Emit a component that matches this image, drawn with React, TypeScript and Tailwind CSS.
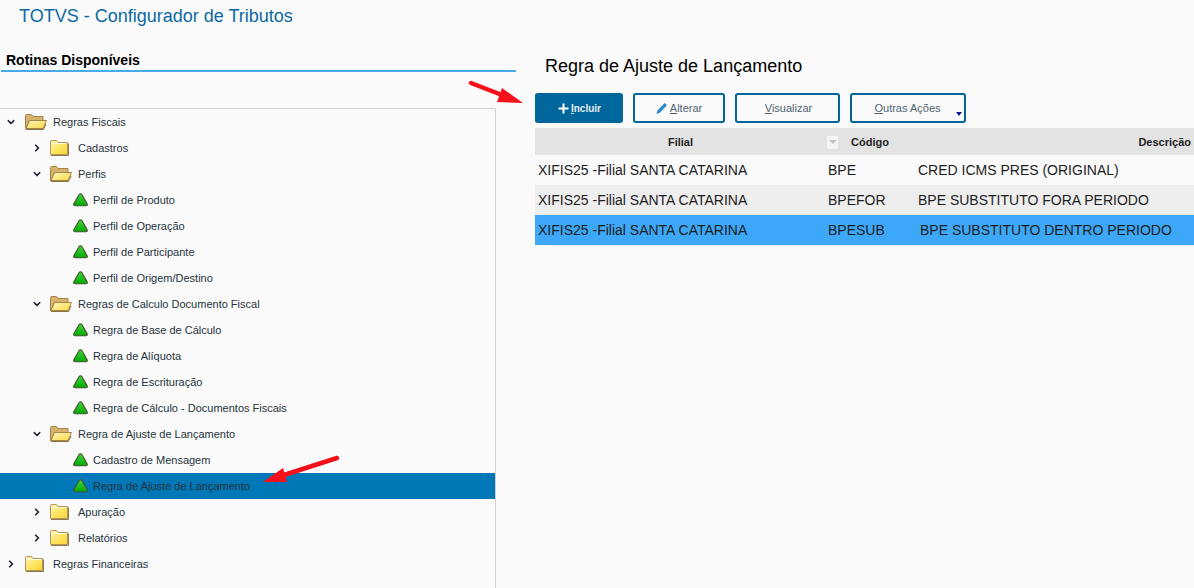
import React from "react";

const ClosedFolder = () => (
  <svg width="19" height="16" viewBox="0 0 19 16" className="shrink-0">
    <defs>
      <linearGradient id="fc" x1="0" y1="0" x2="1" y2="1">
        <stop offset="0" stopColor="#fff6b8" />
        <stop offset="0.55" stopColor="#fde45e" />
        <stop offset="1" stopColor="#f8d438" />
      </linearGradient>
    </defs>
    <path d="M0.5 14.5 L0.5 1.5 Q0.5 0.5 1.5 0.5 L6.5 0.5 L8 2.5 L17.5 2.5 L17.5 14.5 Z" fill="url(#fc)" stroke="#b4935a" />
    <path d="M1.5 3.5 H16.5" stroke="#fffce6" strokeWidth="1" />
    <path d="M1 15.5 H18.5 V3.5" fill="none" stroke="#8f7a4e" strokeWidth="1" />
  </svg>
);

const OpenFolder = () => (
  <svg width="22" height="16" viewBox="0 0 22 16" className="shrink-0">
    <defs>
      <linearGradient id="fo" x1="0" y1="0" x2="1" y2="1">
        <stop offset="0" stopColor="#fff7c0" />
        <stop offset="1" stopColor="#f9d840" />
      </linearGradient>
    </defs>
    <path d="M0.5 15 L0.5 1.5 Q0.5 0.5 1.5 0.5 L6.5 0.5 L8 2.5 L18 2.5 L18 7 L4 7 Z" fill="#d6b26a" stroke="#a5854a" />
    <path d="M4.5 6.5 L21.5 6.5 L18 14.5 L1 14.5 Z" fill="url(#fo)" stroke="#a5854a" />
    <path d="M1 15.5 H18.5 L21 10" fill="none" stroke="#86713f" />
  </svg>
);

const Leaf = () => (
  <svg width="15" height="14" viewBox="0 0 15 14" className="shrink-0">
    <defs>
      <linearGradient id="lf" x1="0" y1="0" x2="0" y2="1">
        <stop offset="0" stopColor="#3ed83e" />
        <stop offset="1" stopColor="#00a800" />
      </linearGradient>
    </defs>
    <path d="M7.5 0.8 Q8.4 0.8 9 1.8 L14 10.6 Q15 12.8 12.7 12.8 L2.3 12.8 Q0 12.8 1 10.6 L6 1.8 Q6.6 0.8 7.5 0.8 Z" fill="url(#lf)" stroke="#4a4f30" strokeWidth="1.1" />
  </svg>
);

const Chevron = ({ open }: { open: boolean }) => (
  <svg width="8" height="8" viewBox="0 0 8 8" className="shrink-0">
    <path d={open ? "M0.8 2.2 L4 5.4 L7.2 2.2" : "M2.2 0.8 L5.4 4 L2.2 7.2"} fill="none" stroke="#1b2230" strokeWidth="1.6" />
  </svg>
);

type Node = { label: string; level: 0 | 1 | 2; kind: "open" | "closed" | "leaf"; selected?: boolean };

const nodes: Node[] = [
  { label: "Regras Fiscais", level: 0, kind: "open" },
  { label: "Cadastros", level: 1, kind: "closed" },
  { label: "Perfis", level: 1, kind: "open" },
  { label: "Perfil de Produto", level: 2, kind: "leaf" },
  { label: "Perfil de Operação", level: 2, kind: "leaf" },
  { label: "Perfil de Participante", level: 2, kind: "leaf" },
  { label: "Perfil de Origem/Destino", level: 2, kind: "leaf" },
  { label: "Regras de Calculo Documento Fiscal", level: 1, kind: "open" },
  { label: "Regra de Base de Cálculo", level: 2, kind: "leaf" },
  { label: "Regra de Alíquota", level: 2, kind: "leaf" },
  { label: "Regra de Escrituração", level: 2, kind: "leaf" },
  { label: "Regra de Cálculo - Documentos Fiscais", level: 2, kind: "leaf" },
  { label: "Regra de Ajuste de Lançamento", level: 1, kind: "open" },
  { label: "Cadastro de Mensagem", level: 2, kind: "leaf" },
  { label: "Regra de Ajuste de Lançamento", level: 2, kind: "leaf", selected: true },
  { label: "Apuração", level: 1, kind: "closed" },
  { label: "Relatórios", level: 1, kind: "closed" },
  { label: "Regras Financeiras", level: 0, kind: "closed" },
];

const TreeRow = ({ node }: { node: Node }) => {
  const indent = node.level === 0 ? "pl-[7px]" : node.level === 1 ? "pl-[33px]" : "pl-[73px]";
  const gap = node.level === 0 ? "ml-[10px]" : "ml-[9px]";
  return (
    <div className={`flex h-[26px] items-center ${indent} ${node.selected ? "bg-[#0077b6]" : ""}`}>
      {node.kind !== "leaf" && <Chevron open={node.kind === "open"} />}
      {node.kind === "open" && <span className={`${gap} w-[28px]`}><OpenFolder /></span>}
      {node.kind === "closed" && <span className={`${gap} w-[28px]`}><ClosedFolder /></span>}
      {node.kind === "leaf" && <span className="w-[20px]"><Leaf /></span>}
      <span className="text-[11px] leading-none text-[#26333c]">{node.label}</span>
    </div>
  );
};

const rows = [
  { filial: "XIFIS25 -Filial SANTA CATARINA", code: "BPE", desc: "CRED ICMS PRES (ORIGINAL)", bg: "", desc2: "pl-[3px]" },
  { filial: "XIFIS25 -Filial SANTA CATARINA", code: "BPEFOR", desc: "BPE SUBSTITUTO FORA PERIODO", bg: "bg-[#eeeeee]", desc2: "pl-[3px]" },
  { filial: "XIFIS25 -Filial SANTA CATARINA", code: "BPESUB", desc: "BPE SUBSTITUTO DENTRO PERIODO", bg: "bg-[#3ea8f8]", desc2: "pl-[5px]" },
];

const outlineBtn = "flex h-[30px] items-center justify-center rounded-[3px] border-2 border-[#00669c] text-[11px] text-[#4f6472]";

export default function App() {
  return (
    <div className="relative h-[588px] w-[1194px] overflow-hidden bg-[#fafafa] font-['Liberation_Sans',Arial,sans-serif]">
      <div className="h-[48px] pl-[19px] pt-[5px] text-[18px] leading-[22px] text-[#0c69a3]">TOTVS - Configurador de Tributos</div>

      <div className="flex h-[540px]">
        <div className="flex w-[516px] flex-col">
          <div className="ml-[1px] h-[24px] border-b-2 border-[#45ace9] pl-[5px] pt-[4px] text-[14px] font-bold leading-[16px] text-black">Rotinas Disponíveis</div>
          <div className="mt-[36px] w-[496px] flex-1 rounded-tr-[2px] border-t border-r border-[#cfcfcf]">
            {nodes.map((n, i) => (
              <TreeRow key={i} node={n} />
            ))}
          </div>
        </div>

        <div className="flex-1 pl-[19px]">
          <div className="h-[45px] pl-[10px] pt-[7px] text-[18px] leading-[22px] text-black">Regra de Ajuste de Lançamento</div>
          <div className="flex gap-[10px]">
            <button className="flex h-[30px] w-[88px] items-center justify-center rounded-[3px] bg-[#00669c] text-[10px] font-bold text-[#e6eef3]">
              <svg width="11" height="11" viewBox="0 0 11 11" className="mr-[2px] ml-[1px]">
                <path d="M5.5 0.5 V10.5 M0.5 5.5 H10.5" stroke="#ffffff" strokeWidth="2" />
              </svg>
              <span><span className="underline">I</span>ncluir</span>
            </button>
            <button className={`${outlineBtn} w-[92px]`}>
              <svg width="12" height="13" viewBox="0 0 12 13" className="mr-[2px]">
                <path d="M0.5 12 L1.5 8.5 L8.8 1 L11 3.2 L3.8 10.8 Z" fill="#2a87c8" />
              </svg>
              <span><span className="underline">A</span>lterar</span>
            </button>
            <button className={`${outlineBtn} w-[105px]`}>
              <span className="ml-[2px]"><span className="underline">V</span>isualizar</span>
            </button>
            <button className={`${outlineBtn} relative w-[116px]`}>
              <span className="-ml-[1px]"><span className="underline">O</span>utras Ações</span>
              <span className="absolute bottom-[5px] right-[2px] h-0 w-0 border-x-[3.5px] border-t-[4px] border-x-transparent border-t-[#10109a]" />
            </button>
          </div>

          <div className="mt-[5px] grid h-[27px] grid-cols-[290px_90px_1fr] items-center bg-[#e3e3e3] pt-[1px] text-[11px] font-bold text-[#222222]">
            <div className="pl-[1px] text-center">Filial</div>
            <div className="flex items-center pl-[2px]">
              <span className="flex h-[13px] w-[11px] items-center justify-center bg-[#f5f5f5]">
                <span className="h-0 w-0 border-x-[4px] border-t-[4px] border-x-transparent border-t-[#c4c4c4]" />
              </span>
              <span className="ml-[13px]">Código</span>
            </div>
            <div className="pr-[3px] text-right">Descrição</div>
          </div>

          {rows.map((r) => (
            <div key={r.code} className={`grid h-[30px] grid-cols-[290px_90px_1fr] items-center text-[14px] text-[#1d1d1d] ${r.bg}`}>
              <div className="pl-[3px]">{r.filial}</div>
              <div className="pl-[3px]">{r.code}</div>
              <div className={r.desc2}>{r.desc}</div>
            </div>
          ))}
        </div>
      </div>

      <svg width="82" height="36" viewBox="0 0 82 36" className="absolute left-[260px] top-[450px]">
        <path d="M77 8 L24 25" stroke="#f5101a" strokeWidth="4.5" strokeLinecap="round" />
        <path d="M3 32 L27 32 L23 18 Z" fill="#f5101a" />
      </svg>
      <svg width="62" height="30" viewBox="0 0 62 30" className="absolute left-[466px] top-[78px]">
        <path d="M5 5 L36 17" stroke="#f5101a" strokeWidth="4.5" strokeLinecap="round" />
        <path d="M57 25 L31 24 L36 10 Z" fill="#f5101a" />
      </svg>
    </div>
  );
}
